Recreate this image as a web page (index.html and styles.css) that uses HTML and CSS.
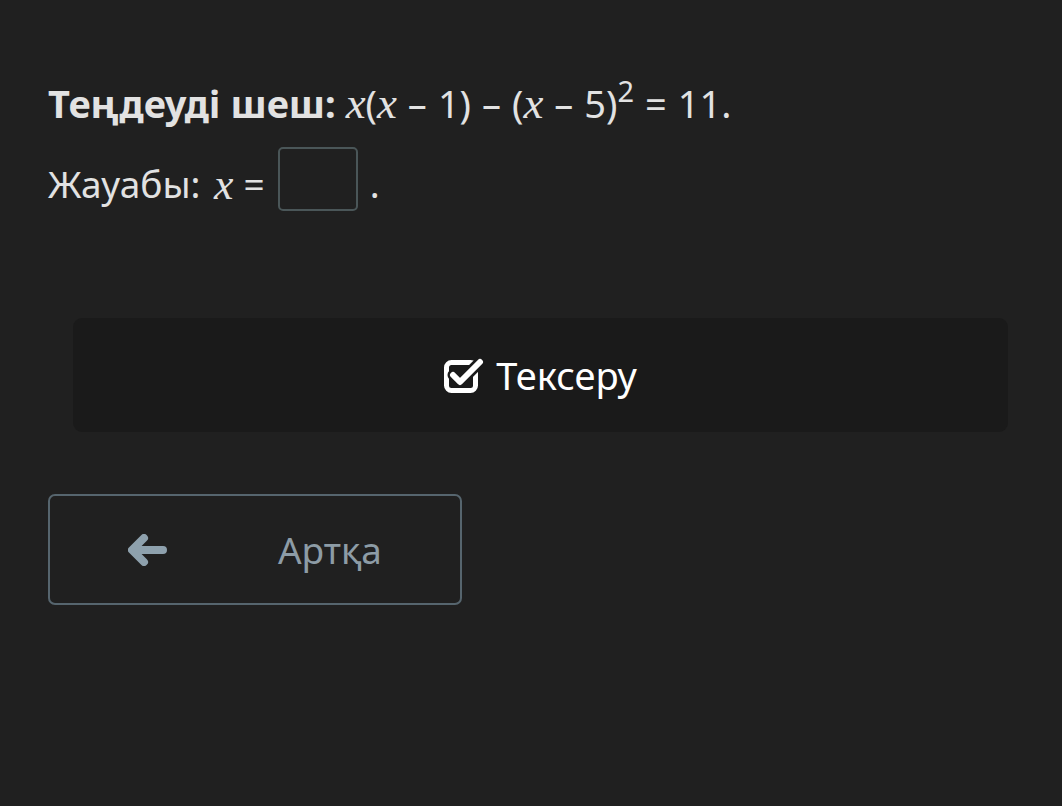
FILE: index.html
```html
<!DOCTYPE html>
<html lang="kk">
<head>
<meta charset="utf-8">
<link rel="stylesheet" href="styles.css">
</head>
<body>
<main class="page">
  <p class="task"><strong>Теңдеуді шеш:</strong> <span class="mv">x</span>(<span class="mv">x</span><span class="op">–</span>1)<span class="op">–</span>(<span class="mv">x</span><span class="op">–</span>5)<sup>2</sup><span class="op">=</span>11.</p>
  <p class="answer">Жауабы: <span class="mv mv-ans">x</span><span class="eq">=</span><span class="box"></span><span class="dot">.</span></p>
  <button class="check" type="button">
    <svg class="check-icon" viewBox="0 0 40 36" width="40" height="36" aria-hidden="true">
      <rect x="2.5" y="5.5" width="29" height="28" rx="5" fill="none" stroke="#fff" stroke-width="5"/>
      <path d="M9 18 L16 25 L36 5" fill="none" stroke="#1a1a1a" stroke-width="11" stroke-linecap="round" stroke-linejoin="round"/>
      <path d="M9 18 L16 25 L36 5" fill="none" stroke="#fff" stroke-width="6" stroke-linecap="round" stroke-linejoin="round"/>
    </svg>
    <span>Тексеру</span>
  </button>
  <button class="back" type="button">
    <svg class="back-icon" viewBox="0 0 40 32" width="40" height="32" aria-hidden="true">
      <path d="M16 4 L4 16 L16 28 M5 16 H35" fill="none" stroke="#8ea1ad" stroke-width="8" stroke-linecap="round" stroke-linejoin="round"/>
    </svg>
    <span class="back-label">Артқа</span>
  </button>
</main>
</body>
</html>
```
FILE: styles.css
```css
html, body {
  margin: 0;
  padding: 0;
  background: #202020;
}
body {
  width: 1062px;
  height: 806px;
  overflow: hidden;
  font-family: "Noto Sans", "Open Sans", sans-serif;
  color: #e2e2e2;
}
.page {
  padding: 73px 48px 0 48px;
  display: flex;
  flex-direction: column;
}
.task {
  margin: 0;
  font-size: 38px;
  line-height: 60px;
  white-space: pre;
}
.task strong {
  font-weight: 700;
}
.mv {
  font-family: "Liberation Serif", "DejaVu Serif", serif;
  font-style: italic;
  font-size: 1.18em;
}
.mv-ans {
  margin-left: 4px;
}
.op {
  padding: 0 11px;
}
.task sup {
  font-size: 29px;
  line-height: 0;
  vertical-align: 16px;
}
.answer {
  margin: 14px 0 0 0;
  font-size: 37px;
  line-height: 62px;
  display: flex;
  align-items: center;
  white-space: pre;
}
.eq {
  margin-left: 10px;
}
.box {
  display: inline-block;
  width: 76px;
  height: 60px;
  border: 2px solid #4a5658;
  border-radius: 5px;
  margin-left: 13px;
  margin-bottom: 10px;
}
.dot {
  margin-left: 12px;
}
.check {
  margin: 97px 6px 0 25px;
  height: 114px;
  background: #1a1a1a;
  border: none;
  border-radius: 9px;
  display: flex;
  align-items: center;
  justify-content: center;
  gap: 12px;
  color: #ffffff;
  font-family: "Noto Sans", "Open Sans", sans-serif;
  font-size: 38px;
  padding: 0;
}
.check-icon {
  display: block;
}
.back {
  margin-top: 62px;
  width: 414px;
  height: 111px;
  background: transparent;
  border: 2px solid #56656e;
  border-radius: 7px;
  display: flex;
  align-items: center;
  padding: 0 0 0 78px;
  color: #8d9ca6;
  font-family: "Noto Sans", "Open Sans", sans-serif;
  font-size: 37px;
}
.back-label {
  margin-left: 110px;
}
```
